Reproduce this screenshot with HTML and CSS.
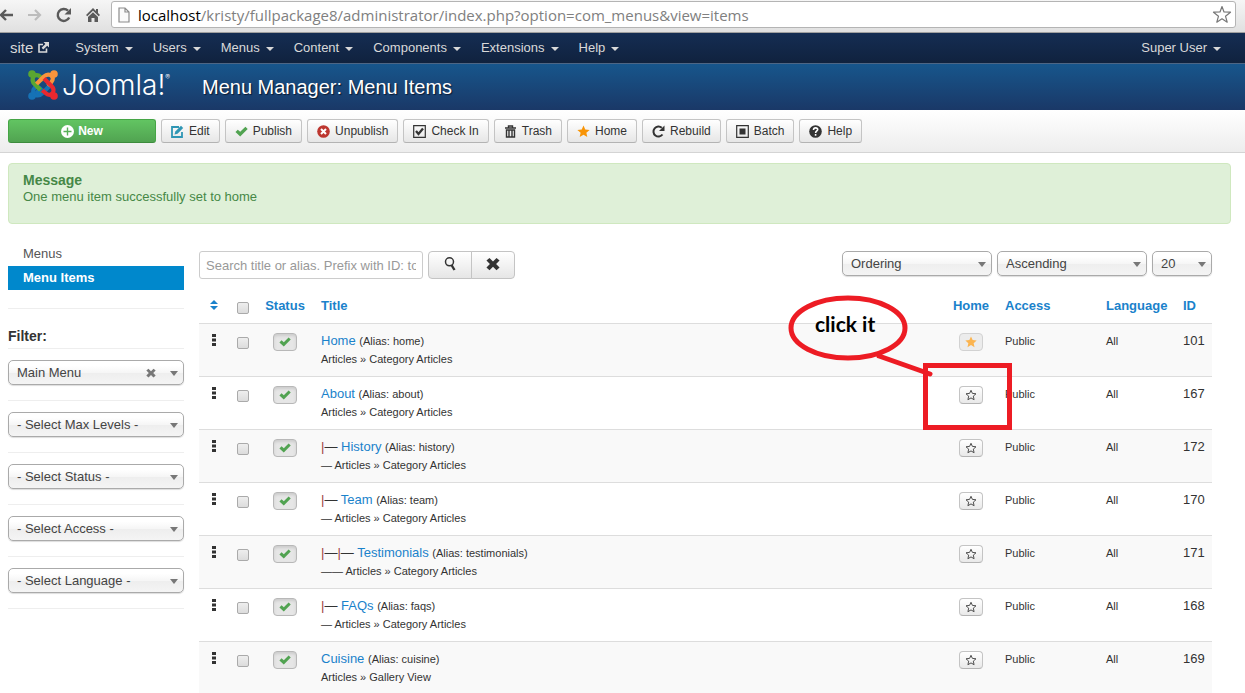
FILE: index.html
```html
<!DOCTYPE html>
<html lang="en">
<head>
<meta charset="utf-8">
<title>Menu Manager: Menu Items</title>
<link rel="stylesheet" href="styles.css">
</head>
<body>
<svg class="sprite" aria-hidden="true">
  <symbol id="check" viewBox="0 0 14 14"><path d="M.5 7.500 3 5 5.600 7.400 11.200 1.800 13.700 4.200 5.600 12.300z"/></symbol>
  <symbol id="star" viewBox="0 0 14 14"><path d="M7 .5 8.900 4.800 13.600 5.300 10.100 8.400 11.100 13 7 10.600 2.900 13 3.900 8.400.4 5.300 5.100 4.800z"/></symbol>
  <symbol id="star-o" viewBox="0 0 14 14"><path d="M7 1.500 8.600 5.100 12.800 5.600 9.700 8.300 10.600 12.500 7 10.400 3.400 12.500 4.300 8.300 1.200 5.600 5.400 5.100z" fill="none" stroke="#444" stroke-width="1.100"/></symbol>
  <symbol id="cross" viewBox="0 0 16 16"><path d="M4 1 8 5 12 1 15.500 4 11.500 8 15.500 12 12 15 8 11 4 15 .5 12 4.500 8 .5 4z"/></symbol>
  <symbol id="dots" viewBox="0 0 4 12"><path d="M0 0h4v3H0zM0 4.500h4v3H0zM0 9h4v3H0z"/></symbol>
  <symbol id="arm" viewBox="0 0 30 30"><circle cx="4" cy="4" r="3.800"/><path d="m16 10-3.500-3C10 4.500 6.500 4.500 5 7.500c-1 2.500-.5 4.500 1.500 6.500l7.500 7.500" fill="none" stroke="currentColor" stroke-width="4.200"/></symbol>
</svg>

<div class="browser">
  <button class="chrome-btn" aria-label="Back"><svg width="16" height="16" viewBox="0 0 16 16"><path d="M15 8H3M8 3 3 8l5 5" fill="none" stroke="#5a5a5a" stroke-width="2.400"/></svg></button>
  <button class="chrome-btn" aria-label="Forward"><svg width="16" height="16" viewBox="0 0 16 16"><path d="M1 8h12M8 3l5 5-5 5" fill="none" stroke="#bcbcbc" stroke-width="2.200"/></svg></button>
  <button class="chrome-btn" aria-label="Reload"><svg width="16" height="16" viewBox="0 0 16 16"><path d="M13.200 10.500A6 6 0 1 1 12 3.700" fill="none" stroke="#5a5a5a" stroke-width="2.400"/><path d="M15 1v6.500H8.500z" fill="#5a5a5a"/></svg></button>
  <button class="chrome-btn" aria-label="Home page"><svg width="16" height="16" viewBox="0 0 16 16"><path d="M8 1 1 8l1.300 1.300L8 3.800l5.700 5.500L15 8l-2-2V2h-2v2zM8 5.200 3 10v5h3.500v-4h3v4H13v-5z" fill="#5a5a5a"/></svg></button>
  <div class="address">
    <svg width="12" height="16" viewBox="0 0 12 16"><path d="M1 1h6l4 4v10H1zM7 1v4h4" fill="#fafafa" stroke="#8c8c8c" stroke-width="1.200"/></svg>
    <span class="url"><b>localhost</b>/kristy/fullpackage8/administrator/index.php?option=com_menus&amp;view=items</span>
    <button class="chrome-btn" aria-label="Bookmark"><svg width="20" height="19" viewBox="0 0 20 19"><path d="M10 1.500 12 7l6.500.2-5 4 1.700 6L10 13.800l-5.200 3.400 1.700-6-5-4L8 7z" fill="#fff" stroke="#777" stroke-width="1.200" stroke-linejoin="round"/></svg></button>
  </div>
</div>

<nav class="navbar">
  <a class="site" href="#">site <svg width="11" height="11" viewBox="0 0 11 11"><path d="M5 2.500H1v7.500h7.500V6.500" fill="none" stroke="currentColor" stroke-width="1.600"/><path d="M5.500 0H11v5.500L9.200 3.700 5.300 7.500 3.600 5.800 7.400 1.900z" fill="currentColor"/></svg></a>
  <a href="#">System<i class="caret"></i></a>
  <a href="#">Users<i class="caret"></i></a>
  <a href="#">Menus<i class="caret"></i></a>
  <a href="#">Content<i class="caret"></i></a>
  <a href="#">Components<i class="caret"></i></a>
  <a href="#">Extensions<i class="caret"></i></a>
  <a href="#">Help<i class="caret"></i></a>
  <a class="user" href="#">Super User<i class="caret"></i></a>
</nav>

<header class="header">
  <a class="logo" href="#">
    <svg class="mark" width="30" height="30" viewBox="0 0 30 30">
      <use href="#arm" width="30" height="30" class="arm-blue" transform="rotate(270 15 15)"/>
      <use href="#arm" width="30" height="30" class="arm-green"/>
      <use href="#arm" width="30" height="30" class="arm-orange" transform="rotate(90 15 15)"/>
      <use href="#arm" width="30" height="30" class="arm-red" transform="rotate(180 15 15)"/>
      <path d="m8 23.500 6-6" stroke="#1672b5" stroke-width="4.200"/>
      <path d="m8.500 16 4 4" stroke="#5aa631" stroke-width="4.200"/>
    </svg>
    <span class="wordmark">Joomla!<sup>®</sup></span>
  </a>
  <h1>Menu Manager: Menu Items</h1>
</header>

<div class="toolbar">
  <button class="btn new"><svg width="13" height="13" viewBox="0 0 13 13"><circle cx="6.500" cy="6.500" r="6.500" fill="#fff"/><path d="M6.500 2.500v8M2.500 6.500h8" stroke="#57b157" stroke-width="1.400"/></svg>New</button>
  <button class="btn"><svg width="13" height="13" viewBox="0 0 13 13"><path d="M8 2H1v10h10V7" fill="none" stroke="#2f96b4" stroke-width="1.800"/><path d="m3.500 9.500.8-3L10 .8l2.200 2.200-5.700 5.700z" fill="#2f96b4"/></svg>Edit</button>
  <button class="btn"><svg class="green" width="13" height="13"><use href="#check"/></svg>Publish</button>
  <button class="btn"><svg width="13" height="13" viewBox="0 0 13 13"><circle cx="6.500" cy="6.500" r="6.300" fill="#bd362f"/><path d="m4 4 5 5m0-5L4 9" stroke="#fff" stroke-width="2"/></svg>Unpublish</button>
  <button class="btn"><svg width="13" height="13" viewBox="0 0 13 13"><path d="M.7.7h11.600v11.600H.7z" fill="none" stroke="#333" stroke-width="1.200"/><path d="m3 6 2.500 3L10 3.500" fill="none" stroke="#333" stroke-width="2.300"/></svg>Check In</button>
  <button class="btn"><svg width="13" height="13" viewBox="0 0 13 13"><path d="M1 3h11M4.500 2.500V1h4v1.500M2.500 5h8v7h-8zM5 5v7M8 5v7" fill="none" stroke="#333" stroke-width="1.400"/></svg>Trash</button>
  <button class="btn"><svg class="orange" width="13" height="13"><use href="#star"/></svg>Home</button>
  <button class="btn"><svg width="13" height="13" viewBox="0 0 13 13"><path d="M10.500 9.500A5 5 0 1 1 9.800 2.800" fill="none" stroke="#333" stroke-width="2"/><path d="M12.500.5v5.500H7z" fill="#333"/></svg>Rebuild</button>
  <button class="btn"><svg width="13" height="13" viewBox="0 0 13 13"><path d="M.7.7h11.600v11.600H.7z" fill="none" stroke="#333" stroke-width="1.200"/><path d="M3.500 3.500h6v6h-6z" fill="#333"/></svg>Batch</button>
  <button class="btn"><svg width="13" height="13" viewBox="0 0 13 13"><circle cx="6.500" cy="6.500" r="6.300" fill="#333"/><path d="M4.500 5c0-3 4.200-2.600 4.200-.4C8.700 6 6.600 6 6.600 8M6.600 9v1.800" fill="none" stroke="#fff" stroke-width="1.600"/></svg>Help</button>
</div>

<div class="page">
  <div class="message"><h4>Message</h4><p>One menu item successfully set to home</p></div>
  <div class="columns">
    <aside class="sidebar">
      <ul class="submenu">
        <li><a href="#">Menus</a></li>
        <li><a class="active" href="#">Menu Items</a></li>
      </ul>
      <div class="filters">
        <h4>Filter:</h4>
        <div class="filter"><div class="select"><select aria-label="Menu"><option>Main Menu</option></select><button class="clear" aria-label="Clear"><svg width="10" height="10"><use href="#cross"/></svg></button></div></div>
        <div class="filter"><div class="select"><select aria-label="Max levels"><option>- Select Max Levels -</option></select></div></div>
        <div class="filter"><div class="select"><select aria-label="Status"><option>- Select Status -</option></select></div></div>
        <div class="filter"><div class="select"><select aria-label="Access"><option>- Select Access -</option></select></div></div>
        <div class="filter"><div class="select"><select aria-label="Language"><option>- Select Language -</option></select></div></div>
      </div>
    </aside>

    <main class="main">
      <div class="searchbar">
        <input type="text" aria-label="Search" placeholder="Search title or alias. Prefix with ID: to search">
        <div class="group">
          <button aria-label="Search"><svg width="12" height="14" viewBox="0 0 12 14"><circle cx="5.500" cy="4.800" r="4" fill="none" stroke="#333" stroke-width="1.500"/><path d="m7.500 8 3 5" stroke="#333" stroke-width="2.400"/></svg></button>
          <button aria-label="Clear search"><svg width="14" height="14"><use href="#cross"/></svg></button>
        </div>
        <div class="sorting">
          <div class="select wide"><select aria-label="Sort by"><option>Ordering</option></select></div>
          <div class="select wide"><select aria-label="Direction"><option>Ascending</option></select></div>
          <div class="select narrow"><select aria-label="Limit"><option>20</option></select></div>
        </div>
      </div>

      <div class="listing">
        <table>
          <colgroup><col class="c-sort"><col class="c-box"><col class="c-status"><col><col class="c-home"><col class="c-access"><col class="c-lang"><col class="c-id"></colgroup>
          <thead>
            <tr>
              <th class="mid"><a href="#" aria-label="Ordering"><svg width="8" height="10" viewBox="0 0 8 10"><path d="M4 0l4 4H0zM0 6h8l-4 4z" fill="currentColor"/></svg></a></th>
              <th class="mid"><input type="checkbox" aria-label="Select all"></th>
              <th class="mid"><a href="#">Status</a></th>
              <th><a href="#">Title</a></th>
              <th class="mid"><a href="#">Home</a></th>
              <th><a href="#">Access</a></th>
              <th><a href="#">Language</a></th>
              <th><a href="#">ID</a></th>
            </tr>
          </thead>
          <tbody>
            <tr>
              <td class="mid"><svg class="dots" width="4" height="12"><use href="#dots"/></svg></td>
              <td class="mid"><input type="checkbox" aria-label="Select Home"></td>
              <td class="mid"><button class="micro on" aria-label="Published"><svg width="12" height="12"><use href="#check"/></svg></button></td>
              <td><a href="#">Home</a> <small>(Alias: home)</small><div class="type">Articles » Category Articles</div></td>
              <td class="mid"><button class="micro default" aria-label="Default"><svg width="12" height="12"><use href="#star"/></svg></button></td>
              <td><small>Public</small></td><td><small>All</small></td><td>101</td>
            </tr>
            <tr>
              <td class="mid"><svg class="dots" width="4" height="12"><use href="#dots"/></svg></td>
              <td class="mid"><input type="checkbox" aria-label="Select About"></td>
              <td class="mid"><button class="micro on" aria-label="Published"><svg width="12" height="12"><use href="#check"/></svg></button></td>
              <td><a href="#">About</a> <small>(Alias: about)</small><div class="type">Articles » Category Articles</div></td>
              <td class="mid"><button class="micro" aria-label="Set default"><svg width="12" height="12"><use href="#star-o"/></svg></button></td>
              <td><small>Public</small></td><td><small>All</small></td><td>167</td>
            </tr>
            <tr>
              <td class="mid"><svg class="dots" width="4" height="12"><use href="#dots"/></svg></td>
              <td class="mid"><input type="checkbox" aria-label="Select History"></td>
              <td class="mid"><button class="micro on" aria-label="Published"><svg width="12" height="12"><use href="#check"/></svg></button></td>
              <td><span class="bar">|</span>— <a href="#">History</a> <small>(Alias: history)</small><div class="type">— Articles » Category Articles</div></td>
              <td class="mid"><button class="micro" aria-label="Set default"><svg width="12" height="12"><use href="#star-o"/></svg></button></td>
              <td><small>Public</small></td><td><small>All</small></td><td>172</td>
            </tr>
            <tr>
              <td class="mid"><svg class="dots" width="4" height="12"><use href="#dots"/></svg></td>
              <td class="mid"><input type="checkbox" aria-label="Select Team"></td>
              <td class="mid"><button class="micro on" aria-label="Published"><svg width="12" height="12"><use href="#check"/></svg></button></td>
              <td><span class="bar">|</span>— <a href="#">Team</a> <small>(Alias: team)</small><div class="type">— Articles » Category Articles</div></td>
              <td class="mid"><button class="micro" aria-label="Set default"><svg width="12" height="12"><use href="#star-o"/></svg></button></td>
              <td><small>Public</small></td><td><small>All</small></td><td>170</td>
            </tr>
            <tr>
              <td class="mid"><svg class="dots" width="4" height="12"><use href="#dots"/></svg></td>
              <td class="mid"><input type="checkbox" aria-label="Select Testimonials"></td>
              <td class="mid"><button class="micro on" aria-label="Published"><svg width="12" height="12"><use href="#check"/></svg></button></td>
              <td><span class="bar">|</span>—<span class="bar">|</span>— <a href="#">Testimonials</a> <small>(Alias: testimonials)</small><div class="type">—— Articles » Category Articles</div></td>
              <td class="mid"><button class="micro" aria-label="Set default"><svg width="12" height="12"><use href="#star-o"/></svg></button></td>
              <td><small>Public</small></td><td><small>All</small></td><td>171</td>
            </tr>
            <tr>
              <td class="mid"><svg class="dots" width="4" height="12"><use href="#dots"/></svg></td>
              <td class="mid"><input type="checkbox" aria-label="Select FAQs"></td>
              <td class="mid"><button class="micro on" aria-label="Published"><svg width="12" height="12"><use href="#check"/></svg></button></td>
              <td><span class="bar">|</span>— <a href="#">FAQs</a> <small>(Alias: faqs)</small><div class="type">— Articles » Category Articles</div></td>
              <td class="mid"><button class="micro" aria-label="Set default"><svg width="12" height="12"><use href="#star-o"/></svg></button></td>
              <td><small>Public</small></td><td><small>All</small></td><td>168</td>
            </tr>
            <tr>
              <td class="mid"><svg class="dots" width="4" height="12"><use href="#dots"/></svg></td>
              <td class="mid"><input type="checkbox" aria-label="Select Cuisine"></td>
              <td class="mid"><button class="micro on" aria-label="Published"><svg width="12" height="12"><use href="#check"/></svg></button></td>
              <td><a href="#">Cuisine</a> <small>(Alias: cuisine)</small><div class="type">Articles » Gallery View</div></td>
              <td class="mid"><button class="micro" aria-label="Set default"><svg width="12" height="12"><use href="#star-o"/></svg></button></td>
              <td><small>Public</small></td><td><small>All</small></td><td>169</td>
            </tr>
          </tbody>
        </table>
        <svg class="callout" width="226" height="136" viewBox="0 0 226 136">
          <g fill="none" stroke="#ed1c24" stroke-width="5">
            <ellipse cx="61" cy="33" rx="57" ry="30"/>
            <path d="m92 61 51 18" stroke-linecap="round"/>
            <path d="M138.500 70.500h84v62h-84z"/>
          </g>
          <text x="28" y="37">click it</text>
        </svg>
      </div>
    </main>
  </div>
</div>
</body>
</html>
```
FILE: styles.css
```css
* { box-sizing: border-box; }
body {
  margin: 0;
  height: 100vh;
  overflow: hidden;
  background: #fff;
  color: #333;
  font: 13px/18px "Liberation Sans", Arial, sans-serif;
}
a { color: #1a82cb; text-decoration: none; }
button, input, select { font: inherit; color: inherit; }
button { cursor: pointer; }
h1, h4, p, ul { margin: 0; padding: 0; }
.sprite { display: none; }

.browser {
  display: flex;
  align-items: center;
  gap: 13px;
  height: 33px;
  padding: 0 9px 3px 0;
  background: linear-gradient(#f6f6f6, #e0e0e0);
  border-bottom: 1px solid #a0a0a0;
}
.chrome-btn { display: flex; padding: 0; border: 0; background: none; }
.browser > .chrome-btn:first-child { margin-left: -2px; }
.address {
  flex: 1;
  display: flex;
  align-items: center;
  gap: 8px;
  height: 27px;
  padding: 0 3px 0 6px;
  margin-left: -3px;
  background: #fff;
  border: 1px solid #b4b4b4;
  border-radius: 3px;
}
.url { flex: 1; color: #808080; font: 15px/22px "Open Sans", "Noto Sans", sans-serif; white-space: nowrap; }
.url b { font-weight: 400; color: #000; }

.navbar {
  display: flex;
  align-items: center;
  gap: 20px;
  height: 31px;
  padding: 0 24px 1px 10px;
  background: linear-gradient(#152d53, #10223e);
  border-bottom: 1px solid #4d6685;
}
.navbar a { display: flex; align-items: center; color: #d9d9d9; }
.navbar .site { gap: 5px; margin-right: 6px; font-size: 15px; }
.navbar .user { margin-left: auto; }
.caret {
  margin: 2px 0 0 6px;
  border: 4px solid transparent;
  border-top-color: currentColor;
  border-bottom: 0;
}

.header {
  display: flex;
  align-items: center;
  height: 46px;
  padding-left: 28px;
  background: linear-gradient(#17568c, #1a3867);
}
.logo { display: flex; align-items: center; width: 174px; gap: 4px; padding-bottom: 4px; color: #fff; }
.arm-green { color: #5aa631; fill: #5aa631; }
.arm-orange { color: #f9943b; fill: #f9943b; }
.arm-red { color: #e9282f; fill: #e9282f; }
.arm-blue { color: #1672b5; fill: #1672b5; }
.wordmark { font: 300 28px/30px Inter, sans-serif; white-space: nowrap; }
.wordmark sup { font-size: 7px; line-height: 8px; vertical-align: 15px; }
.header h1 { color: #fff; font-size: 20px; line-height: 24px; font-weight: 400; text-shadow: 1px 1px 1px #0a1a33; }

.toolbar {
  display: flex;
  align-items: flex-start;
  gap: 5px;
  padding: 9px 8px;
  background: linear-gradient(#fff, #ededed);
  border-bottom: 1px solid #d4d4d4;
}
.btn {
  display: flex;
  align-items: center;
  justify-content: center;
  gap: 5px;
  height: 24px;
  padding: 0 9px;
  font-size: 12px;
  border: 1px solid #c4c4c4;
  border-bottom-color: #b3b3b3;
  border-radius: 3px;
  background: linear-gradient(#fff, #e6e6e6);
}
.btn.new {
  width: 148px;
  gap: 4px;
  color: #fff;
  font-weight: 700;
  border-color: #46a546 #46a546 #3d8b3d;
  background: linear-gradient(#62c462, #51a351);
}
.green { fill: #51a351; }
.orange { fill: #f89406; }

.page { padding: 10px 14px 0 8px; }
.message {
  padding: 8px 14px 18px;
  min-height: 61px;
  color: #468847;
  background: #dff0d8;
  border: 1px solid #cfe8bf;
  border-radius: 4px;
}
.message h4 { font-size: 14px; line-height: 17px; }
.message p { line-height: 16px; }

.columns { display: flex; gap: 15px; padding-top: 18px; }
.sidebar { flex: none; width: 176px; }
.submenu { list-style: none; padding-bottom: 18px; border-bottom: 1px solid #eee; }
.submenu a { display: block; padding: 3px 15px; color: #555; }
.submenu .active { color: #fff; font-weight: 700; background: #08c; }
.filters h4 { padding: 18px 0 3px; font-size: 14px; border-bottom: 1px solid #eee; }
.filter { padding: 11px 0 15px; border-bottom: 1px solid #eee; }

.select { position: relative; height: 25px; }
.select select {
  display: block;
  width: 100%;
  height: 25px;
  padding: 0 8px;
  color: #444;
  appearance: none;
  border: 1px solid #aaa;
  border-radius: 5px;
  background: linear-gradient(#fff 20%, #f6f6f6 50%, #eee 52%, #f4f4f4);
  box-shadow: 0 1px 1px #ddd;
}
.select::after {
  content: "";
  position: absolute;
  right: 6px;
  top: 11px;
  border: 4px solid transparent;
  border-top: 5px solid #777;
  border-bottom: 0;
}
.clear { position: absolute; right: 28px; top: 8px; display: flex; padding: 0; border: 0; background: none; fill: #777; }
.wide { width: 150px; }
.narrow { width: 60px; }

.main { flex: 1; min-width: 0; padding: 9px 19px 0 0; }
.searchbar { display: flex; gap: 5px; padding-bottom: 10px; }
.searchbar input {
  width: 224px;
  height: 28px;
  padding: 0 6px;
  border: 1px solid #ccc;
  border-radius: 3px;
}
.searchbar input::placeholder { color: #999; }
.group { display: flex; }
.group button {
  display: flex;
  align-items: center;
  justify-content: center;
  width: 44px;
  height: 28px;
  padding: 0 0 3px;
  border: 1px solid #c4c4c4;
  border-radius: 4px 0 0 4px;
  background: linear-gradient(#fff, #e6e6e6);
  fill: #333;
}
.group button + button { margin-left: -1px; border-radius: 0 4px 4px 0; }
.sorting { display: flex; gap: 5px; margin-left: auto; }

.listing { position: relative; }
table { width: 100%; table-layout: fixed; border-collapse: separate; border-spacing: 0; }
.c-sort { width: 30px; }
.c-box { width: 28px; }
.c-status { width: 56px; }
.c-home { width: 52px; }
.c-access { width: 101px; }
.c-lang { width: 77px; }
.c-id { width: 37px; }
th, td { padding: 8px; text-align: left; vertical-align: top; white-space: nowrap; }
td { border-top: 1px solid #ddd; }
tbody tr:nth-child(odd) { background: #f9f9f9; }
.mid { padding-left: 0; padding-right: 0; text-align: center; }
small, .type { font-size: 11px; }
.bar { color: #a0433c; }
.dots { display: block; margin: 2px auto 0; fill: #333; }
input[type="checkbox"] {
  display: block;
  width: 12px;
  height: 12px;
  margin: 5px auto 0;
  appearance: none;
  border: 1px solid #aaa;
  border-radius: 2px;
  background: linear-gradient(#eee, #dcdcdc);
}
.micro {
  display: flex;
  align-items: center;
  justify-content: center;
  width: 24px;
  height: 18px;
  margin: 1px auto 0;
  padding: 0;
  border: 1px solid #c4c4c4;
  border-bottom-color: #b3b3b3;
  border-radius: 4px;
  background: linear-gradient(#fff, #e9e9e9);
}
.micro.on { fill: #51a351; border-color: #b8b8b8; background: #e6e6e6; box-shadow: inset 0 2px 3px #ccc; }
.micro.default { fill: #fbb450; border-color: #d2d2d2; background: #ececec; }

.callout { position: absolute; top: 6px; right: 199px; pointer-events: none; }
.callout text { font: 700 21px Lato, sans-serif; fill: #000; }
```
